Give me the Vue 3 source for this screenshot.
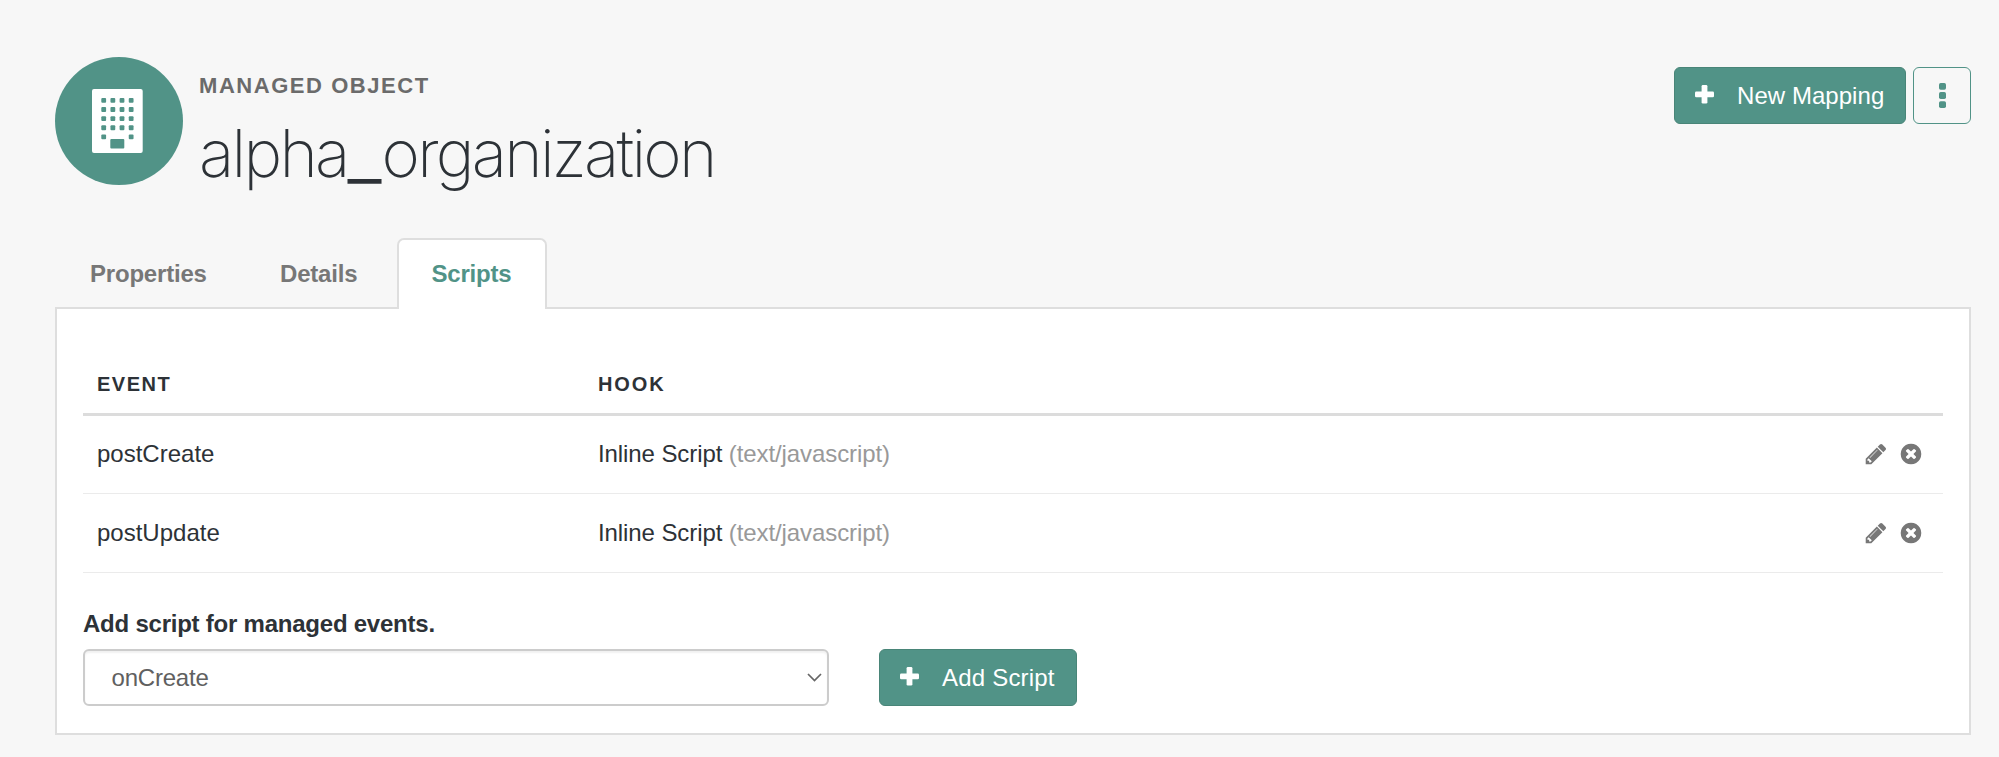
<script setup>
const tabs = [
  { name: 'Properties', active: false },
  { name: 'Details', active: false },
  { name: 'Scripts', active: true },
]
const rows = [
  { event: 'postCreate', hook: 'Inline Script', type: '(text/javascript)' },
  { event: 'postUpdate', hook: 'Inline Script', type: '(text/javascript)' },
]
const windows = []
for (let r = 0; r < 5; r++) {
  for (let c = 0; c < 4; c++) {
    if (r < 4 || c === 0 || c === 3) windows.push({ x: 9.3 + c * 9.15, y: 9 + r * 9.12 })
  }
}
</script>

<template>
  <div class="page">
    <header class="header">
      <div class="avatar">
        <svg width="51" height="64" viewBox="0 0 51 64">
          <rect width="50.7" height="64" rx="2" fill="#fff" />
          <rect v-for="(w, i) in windows" :key="i" :x="w.x" :y="w.y" width="4.8" height="4.8" rx="1" fill="#519387" />
          <rect x="18.3" y="50" width="14" height="9.5" rx="1" fill="#519387" />
        </svg>
      </div>
      <div class="titles">
        <div class="kind">MANAGED OBJECT</div>
        <h1 class="title">alpha<span class="underscore">_</span>organization</h1>
      </div>
      <div class="actions">
        <button class="btn">
          <svg class="plus" width="19" height="19" viewBox="0 0 19 19">
            <rect x="6.6" width="5.8" height="18.6" rx="1.3" />
            <rect y="6.4" width="19" height="5.8" rx="1.3" />
          </svg>
          <span class="btn-new">New Mapping</span>
        </button>
        <button class="btn-more" aria-label="More">
          <svg width="7" height="25" viewBox="0 0 7 25" fill="#519387">
            <rect width="7" height="6.8" rx="1.7" />
            <rect y="9.1" width="7" height="6.8" rx="1.7" />
            <rect y="18.2" width="7" height="6.8" rx="1.7" />
          </svg>
        </button>
      </div>
    </header>

    <nav class="tabs">
      <a v-for="t in tabs" :key="t.name" class="tab" :class="{ active: t.active }">{{ t.name }}</a>
    </nav>

    <section class="panel">
      <div class="row head">
        <div class="event">EVENT</div>
        <div class="hook">HOOK</div>
      </div>
      <div v-for="r in rows" :key="r.event" class="row">
        <div class="event">{{ r.event }}</div>
        <div class="hook">{{ r.hook }} <span class="muted">{{ r.type }}</span></div>
        <div class="icons">
          <svg width="24" height="24" viewBox="0 0 1792 1792">
            <path d="M491 1536l91-91-235-235-91 91v107h128v128h107zm523-928q0-22-22-22-10 0-17 7l-542 542q-7 7-7 17 0 22 22 22 10 0 17-7l542-542q7-7 7-17zm-54-192l416 416-832 832h-416v-416zm683 96q0 53-37 90l-166 166-416-416 166-165q36-38 90-38 53 0 91 38l235 234q37 39 37 91z" />
          </svg>
          <svg width="24" height="24" viewBox="0 0 1792 1792">
            <path d="M1277 1122q0-26-19-45l-181-181 181-181q19-19 19-45 0-27-19-46l-90-90q-19-19-46-19-26 0-45 19l-181 181-181-181q-19-19-45-19-27 0-46 19l-90 90q-19 19-19 46 0 26 19 45l181 181-181 181q-19 19-19 45 0 27 19 46l90 90q19 19 46 19 26 0 45-19l181-181 181 181q19 19 45 19 27 0 46-19l90-90q19-19 19-46zm387-226q0 209-103 385.5t-279.5 279.5-385.5 103-385.5-103-279.5-279.5-103-385.5 103-385.5 279.5-279.5 385.5-103 385.5 103 279.5 279.5 103 385.5z" />
          </svg>
        </div>
      </div>

      <div class="label">Add script for managed events.</div>
      <div class="form">
        <div class="select">
          <span>onCreate</span>
          <svg width="15" height="9" viewBox="0 0 15 9" fill="none" stroke="#666" stroke-width="1.7">
            <path d="M1 1l6.5 6.5L14 1" />
          </svg>
        </div>
        <button class="btn">
          <svg class="plus" width="19" height="19" viewBox="0 0 19 19">
            <rect x="6.6" width="5.8" height="18.6" rx="1.3" />
            <rect y="6.4" width="19" height="5.8" rx="1.3" />
          </svg>
          <span class="btn-add">Add Script</span>
        </button>
      </div>
    </section>
  </div>
</template>

<style>
body {
  background: #f7f7f7;
}
</style>

<style scoped>
.page {
  box-sizing: border-box;
  width: 1999px;
  height: 757px;
  padding: 57px 28px 0 55px;
  overflow: hidden;
  background: #f7f7f7;
  color: #2d3237;
  font-family: "Liberation Sans", Arial, sans-serif;
  font-size: 24px;
  line-height: 34px;
}
.header {
  display: flex;
  height: 181px;
}
.avatar {
  display: flex;
  align-items: center;
  justify-content: center;
  box-sizing: border-box;
  width: 128px;
  height: 128px;
  padding-right: 4px;
  border-radius: 50%;
  background: #519387;
}
.titles {
  flex: 1;
  padding: 14px 0 0 16px;
}
.kind {
  color: #6b6b6b;
  font-size: 22px;
  font-weight: 700;
  line-height: 30px;
  letter-spacing: 1.55px;
}
.title {
  margin: 13px 0 0;
  font-family: Inter, Roboto, sans-serif;
  font-size: 65.5px;
  font-weight: 250;
  line-height: 80px;
  letter-spacing: -2.75px;
}
.underscore {
  font-size: 76px;
  font-weight: 300;
  line-height: 0;
  letter-spacing: 0;
  vertical-align: -2px;
}
.actions {
  display: flex;
  gap: 7px;
  padding-top: 10px;
}
.btn,
.btn-more {
  display: flex;
  align-items: center;
  box-sizing: border-box;
  height: 57px;
  margin: 0;
  border: 1px solid #498578;
  border-radius: 6px;
  font: inherit;
}
.btn {
  padding: 0 20px;
  background: #519387;
  color: #fff;
}
.header .btn {
  width: 232px;
}
.plus {
  margin-bottom: 3px;
  fill: #fff;
}
.btn span {
  margin-left: 23px;
  white-space: nowrap;
}
.btn-new {
  letter-spacing: 0.05px;
}
.btn-add {
  letter-spacing: 0.2px;
}
.btn-more {
  justify-content: center;
  width: 58px;
  padding: 0;
  border: 1px solid #519387;
  background: #f7f7f7;
}
.tabs {
  display: flex;
  position: relative;
  height: 69px;
}
.tab {
  box-sizing: border-box;
  height: 71px;
  padding: 17px 33px 0;
  border: 2px solid transparent;
  border-bottom: 0;
  color: #777;
  font-weight: 700;
  letter-spacing: -0.2px;
}
.tab:first-child {
  width: 190px;
}
.tab:nth-child(2) {
  width: 152px;
}
.tab.active {
  width: 150px;
  padding: 17px 0 0 32.5px;
  border-color: #dedede;
  border-radius: 7px 7px 0 0;
  background: #fff;
  color: #519387;
}
.panel {
  box-sizing: border-box;
  height: 428px;
  padding: 52px 26px 0;
  border: 2px solid #dedede;
  background: #fff;
}
.row {
  display: flex;
  align-items: center;
  box-sizing: border-box;
  height: 79px;
  padding: 0 20.5px 0 14px;
  border-bottom: 1px solid #ebebeb;
}
.row.head {
  align-items: flex-start;
  height: 55px;
  padding-top: 8px;
  border-bottom: 3px solid #dcdcdc;
  font-size: 20px;
  font-weight: 700;
  line-height: 30px;
  letter-spacing: 1.5px;
}
.row.head + .row {
  height: 78px;
  padding-bottom: 1px;
}
.event {
  width: 501px;
}
.hook {
  flex: 1;
  letter-spacing: -0.09px;
}
.head .hook {
  letter-spacing: 1.9px;
}
.muted {
  color: #999;
}
.icons {
  display: flex;
  gap: 11px;
  fill: #777;
}
.label {
  margin-top: 34px;
  font-weight: 700;
  letter-spacing: -0.23px;
}
.form {
  display: flex;
  gap: 50px;
  margin-top: 8px;
}
.select {
  display: flex;
  align-items: center;
  justify-content: space-between;
  box-sizing: border-box;
  width: 746px;
  height: 57px;
  padding: 0 5px 0 26.5px;
  border: 2px solid #ccc;
  border-radius: 6px;
  box-shadow: inset 0 2px 2px rgba(0, 0, 0, 0.06);
  color: #606060;
  letter-spacing: -0.2px;
}
.form .btn {
  width: 198px;
}
</style>
